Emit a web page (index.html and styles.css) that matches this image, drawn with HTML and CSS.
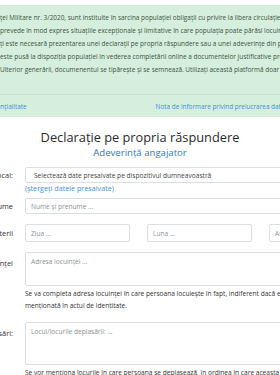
FILE: index.html
```html
<!DOCTYPE html>
<html lang="ro">
<head>
    <meta charset="UTF-8">
    <meta name="viewport" content="width=device-width, initial-scale=1.0">
    <title>Declarație pe propria răspundere</title>
    <link rel="stylesheet" href="styles.css">
</head>
<body>
    <div class="alert">
        <p class="alert-text">
            <span>ței Militare nr. 3/2020, sunt instituite în sarcina populației obligații cu privire la libera circulație a persoanelor</span>
            <span>prevede în mod expres situațiile excepționale și limitative în care populația poate părăsi locuința</span>
            <span>ți este necesară prezentarea unei declarații pe propria răspundere sau a unei adeverințe din partea angajatorului</span>
            <span>este pusă la dispoziția populației în vederea completării online a documentelor justificative prevăzute</span>
            <span>Ulterior generării, documenentul se tipărește și se semnează. Utilizați această platformă doar dacă este cazul</span>
        </p>
        <hr class="alert-rule">
        <div class="alert-links">
            <a href="#" class="first-link">Politica de confidențialitate</a>
            <a href="#">Nota de informare privind prelucrarea datelor cu caracter personal</a>
        </div>
    </div>

    <h1 class="title">Declarație pe propria răspundere</h1>
    <h2 class="subtitle">Adeverință angajator</h2>

    <form class="form">
        <div class="form-row row-select">
            <label class="label">Date salvate local:</label>
            <div class="field">
                <select class="control select">
                    <option>Selectează date presalvate pe dispozitivul dumneavoastră</option>
                </select>
                <a href="#" class="small-link">(ștergeți datele presalvate)</a>
            </div>
        </div>
        <div class="form-row">
            <label class="label">Nume</label>
            <div class="field">
                <input class="control" type="text" placeholder="Nume și prenume ...">
            </div>
        </div>
        <div class="form-row">
            <label class="label">Data nașterii</label>
            <div class="field date-grid">
                <input class="control" type="text" placeholder="Ziua ...">
                <input class="control" type="text" placeholder="Luna ...">
                <input class="control" type="text" placeholder="Anul ...">
            </div>
        </div>
        <div class="form-row row-top">
            <label class="label label-top">Adresa locuinței</label>
            <div class="field">
                <textarea class="control area" placeholder="Adresa locuinței ..."></textarea>
                <p class="help">Se va completa adresa locuinței în care persoana locuiește în fapt, indiferent dacă este identică sau nu cu cea<br>menționată în actul de identitate.</p>
            </div>
        </div>
        <div class="form-row row-top">
            <label class="label label-top">Locul/locurile deplasări:</label>
            <div class="field">
                <textarea class="control area area-tall" placeholder="Locul/locurile deplasării: ..."></textarea>
                <p class="help">Se vor menționa locurile în care persoana se deplasează, în ordinea în care aceasta intenționează să le parcurgă.</p>
            </div>
        </div>
    </form>
</body>
</html>
```

FILE: styles.css
```css
body {
    margin: 0;
    width: 280px;
    height: 375px;
    overflow: hidden;
    background-color: #fff;
    color: #212529;
    font-family: "Open Sans", "Noto Sans", sans-serif;
}
.alert {
    margin-top: 5px;
    padding: 6px 0 4px;
    background-color: #d6eedd;
    color: #3b5443;
}
.alert-text {
    margin: 0;
    font-size: 6.45px;
    line-height: 13px;
    white-space: nowrap;
}
.alert-text span {
    display: block;
}
.alert-rule {
    margin: 18px 0 6px;
    border: 0;
    border-top: 1px solid #c3e3cc;
}
.alert-links {
    display: flex;
    gap: 129px;
    font-size: 6.4px;
    line-height: 12px;
    white-space: nowrap;
}
.alert-links a {
    color: #3d8ee0;
    text-decoration: none;
}
.first-link {
    margin-left: -54px;
}
.title {
    margin: 13px 0 0;
    text-align: center;
    font-size: 12.8px;
    line-height: 15px;
    font-weight: 400;
    color: #2b2b2b;
}
.subtitle {
    margin: 2px 0 0;
    text-align: center;
    font-size: 9.6px;
    line-height: 12px;
    font-weight: 400;
    color: #2f7cc0;
}
.form {
    width: 472px;
    margin: 8px 0 0 -98px;
}
.form-row {
    display: grid;
    grid-template-columns: 120px 349px;
    column-gap: 3px;
    align-items: center;
    margin-bottom: 10px;
}
.row-select {
    align-items: start;
    margin-bottom: 5px;
}
.row-select .label {
    line-height: 16px;
}
.row-top {
    align-items: start;
}
.label {
    padding-right: 9px;
    text-align: right;
    font-size: 7.4px;
    color: #333;
    white-space: nowrap;
}
.label-top {
    padding-top: 6px;
}
.field {
    display: flex;
    flex-direction: column;
}
.control {
    box-sizing: border-box;
    height: 16px;
    padding: 0 5px;
    border: 1px solid #dadfe3;
    border-radius: 2px;
    background-color: #fff;
    color: #555;
    font-family: inherit;
    font-size: 6.6px;
    outline: none;
}
.control::placeholder {
    color: #8d9296;
}
.select {
    appearance: none;
    padding-left: 8px;
    color: #444;
}
.small-link {
    margin-top: 1px;
    font-size: 7.2px;
    line-height: 9px;
    color: #4a90d9;
    text-decoration: none;
    white-space: nowrap;
}
.date-grid {
    display: grid;
    grid-template-columns: repeat(3, 1fr);
    column-gap: 17px;
}
.date-grid .control {
    width: 100%;
    height: 18px;
}
.area {
    height: 34px;
    padding-top: 4px;
    resize: none;
}
.area-tall {
    height: 43px;
}
.help {
    margin: 2px 0 0;
    font-size: 6.6px;
    line-height: 12px;
    color: #333;
    white-space: nowrap;
}
```
